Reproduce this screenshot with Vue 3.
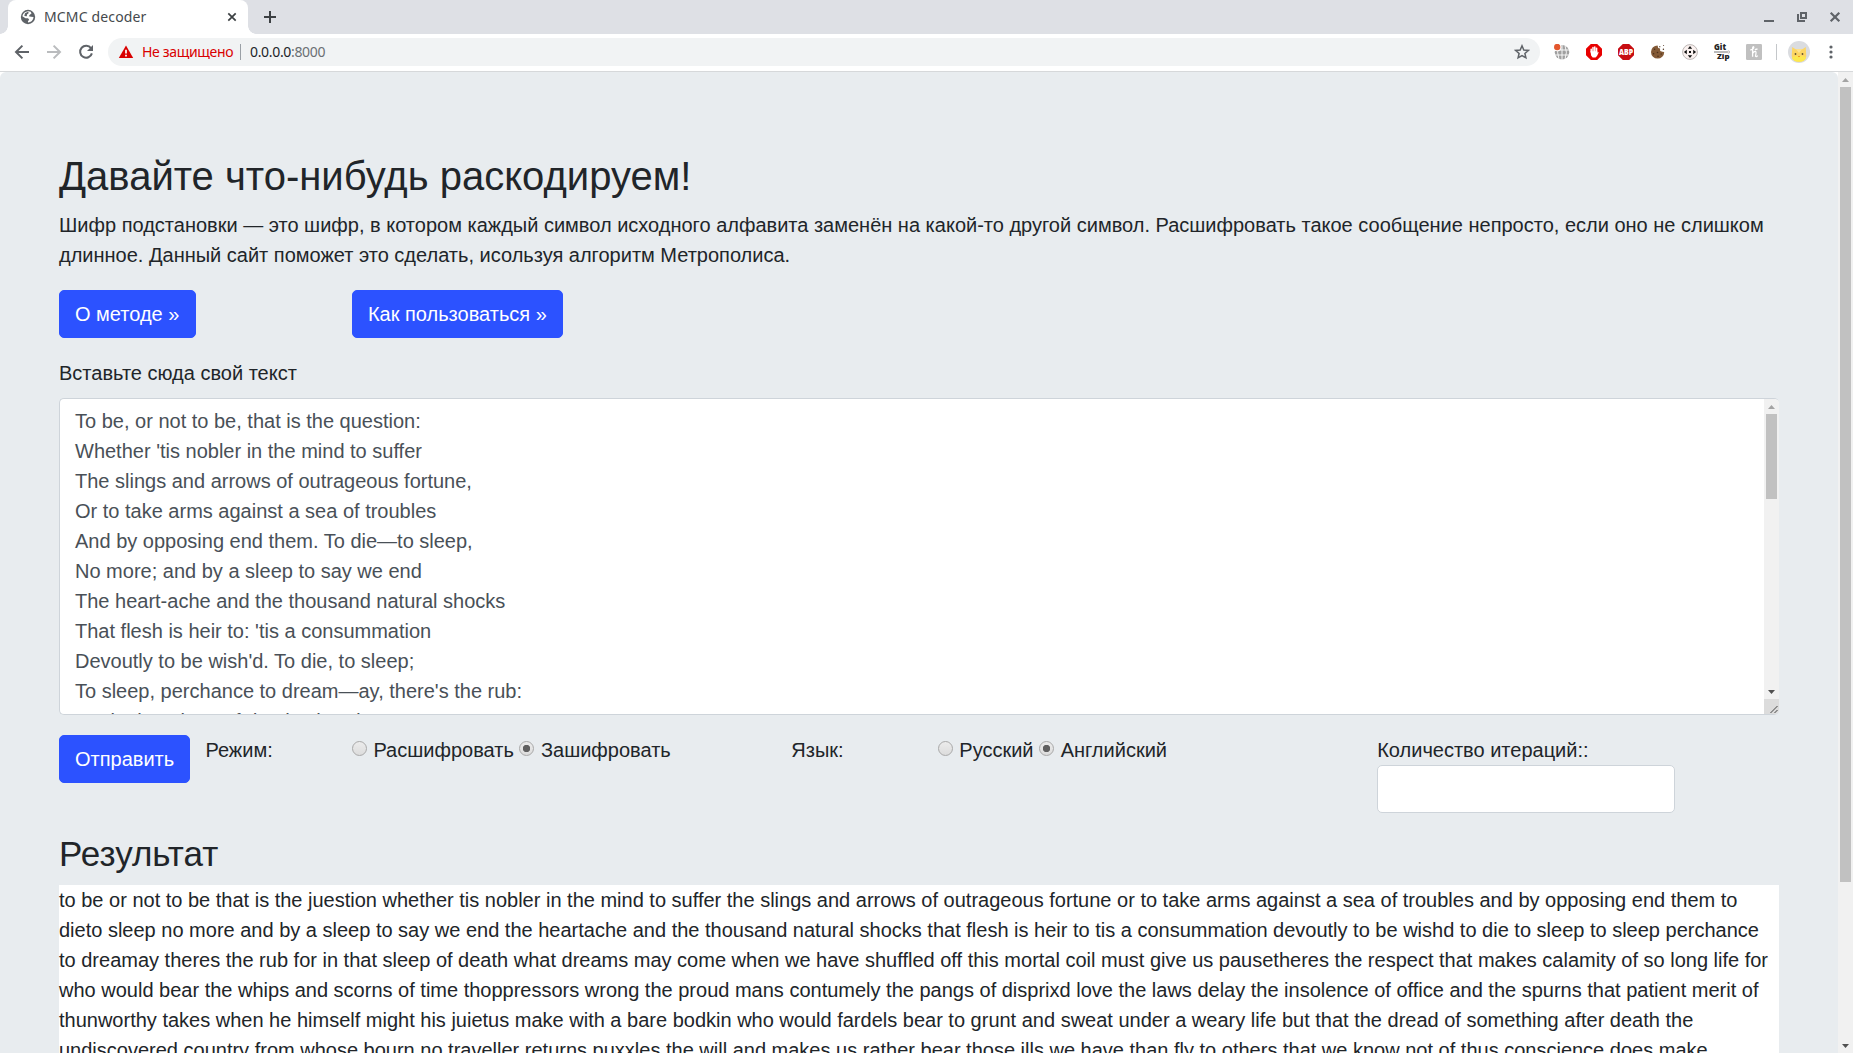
<script setup>
import { ref } from 'vue'

const mode = ref('encode')
const lang = ref('en')

const source = `To be, or not to be, that is the question:
Whether 'tis nobler in the mind to suffer
The slings and arrows of outrageous fortune,
Or to take arms against a sea of troubles
And by opposing end them. To die—to sleep,
No more; and by a sleep to say we end
The heart-ache and the thousand natural shocks
That flesh is heir to: 'tis a consummation
Devoutly to be wish'd. To die, to sleep;
To sleep, perchance to dream—ay, there's the rub:
For in that sleep of death what dreams may come,`

const result =
  'to be or not to be that is the juestion whether tis nobler in the mind to suffer the slings and arrows of outrageous fortune or to take arms against a sea of troubles and by opposing end them to dieto sleep no more and by a sleep to say we end the heartache and the thousand natural shocks that flesh is heir to tis a consummation devoutly to be wishd to die to sleep to sleep perchance to dreamay theres the rub for in that sleep of death what dreams may come when we have shuffled off this mortal coil must give us pausetheres the respect that makes calamity of so long life for who would bear the whips and scorns of time thoppressors wrong the proud mans contumely the pangs of disprixd love the laws delay the insolence of office and the spurns that patient merit of thunworthy takes when he himself might his juietus make with a bare bodkin who would fardels bear to grunt and sweat under a weary life but that the dread of something after death the undiscovered country from whose bourn no traveller returns puxxles the will and makes us rather bear those ills we have than fly to others that we know not of thus conscience does make'
</script>

<template>
  <div class="window">
    <header class="tabstrip">
      <div class="tab">
        <svg class="favicon" width="16" height="16" viewBox="0 0 16 16">
          <circle cx="8" cy="8" r="7.2" fill="#5f6368" />
          <path d="M8.2 2.2 10.7 2.8 11.5 4.5 9.8 5.8 8.8 7.2 11 7.8 13.5 8.1C13.3 11.2 11 13.5 8.1 13.6L7.9 12.2 9.2 10.8 8 9.3 5.5 9.2 2.4 7.2C2.8 4.4 5.1 2.3 8.2 2.2Z" fill="#fff" />
          <path d="M5 4.2 8 2.8 8.8 4 7 5.4 6.8 7.3 4.3 7.1Z" fill="#5f6368" />
        </svg>
        <span class="tab-title">MCMC decoder</span>
        <svg class="tab-close" width="10" height="10" viewBox="0 0 10 10">
          <path d="M1.3 1.3 8.7 8.7M8.7 1.3 1.3 8.7" stroke="#3c4043" stroke-width="1.7" />
        </svg>
      </div>
      <svg class="new-tab" width="14" height="14" viewBox="0 0 14 14">
        <path d="M7 1V13M1 7H13" stroke="#3c4043" stroke-width="2" />
      </svg>
      <div class="controls">
        <svg width="12" height="14" viewBox="0 0 12 14"><path d="M1 11H11" stroke="#5f6368" stroke-width="2" /></svg>
        <svg width="12" height="14" viewBox="0 0 12 14">
          <path d="M5 3H10V8H5ZM2 4V11H9" fill="none" stroke="#5f6368" stroke-width="2" />
        </svg>
        <svg width="12" height="14" viewBox="0 0 12 14">
          <path d="M1.7 2.7 10.3 11.3M10.3 2.7 1.7 11.3" stroke="#5f6368" stroke-width="2.2" />
        </svg>
      </div>
    </header>

    <nav class="toolbar">
      <div class="nav">
        <svg width="16" height="16" viewBox="0 0 16 16"><path d="M15 8H2.5M8.4 1.6 2 8 8.4 14.4" fill="none" stroke="#5f6368" stroke-width="2" /></svg>
        <svg width="16" height="16" viewBox="0 0 16 16"><path d="M1 8H13.5M7.6 1.6 14 8 7.6 14.4" fill="none" stroke="#babcbe" stroke-width="2" /></svg>
        <svg width="16" height="16" viewBox="0 0 16 16">
          <path d="M13 4.2A6 6 0 1 0 13.9 9.4" fill="none" stroke="#5f6368" stroke-width="2" />
          <path d="M15 1V7H9Z" fill="#5f6368" />
        </svg>
      </div>
      <div class="omnibox">
        <svg width="16" height="14" viewBox="0 0 16 14">
          <path d="M8 0.6 15.2 13H0.8Z" fill="#d90000" />
          <path d="M8 4.8V8.6M8 9.8V11.4" stroke="#fff" stroke-width="1.7" />
        </svg>
        <span class="insecure">Не защищено</span>
        <i class="divider"></i>
        <span class="url">0.0.0.0<span class="port">:8000</span></span>
        <svg class="star" width="16" height="16" viewBox="0 0 16 16">
          <path d="M8 1.8 9.8 6 14.3 6.4 10.9 9.4 11.9 13.8 8 11.5 4.1 13.8 5.1 9.4 1.7 6.4 6.2 6Z" fill="none" stroke="#5f6368" stroke-width="1.5" />
        </svg>
      </div>
      <div class="extensions">
        <svg width="16" height="16" viewBox="0 0 16 16">
          <circle cx="8" cy="8.3" r="7.2" fill="#a0a0a0" />
          <path d="M8 1V16M.5 6H15.5M.5 11H15.5M5 1.5Q2.2 8.3 5 15.3M11 1.5Q13.8 8.3 11 15.3" fill="none" stroke="#fff" stroke-width=".9" />
          <circle cx="3.4" cy="3.2" r="4" fill="#fff" />
          <circle cx="3.2" cy="3" r="3.2" fill="#e4572e" />
        </svg>
        <svg width="16" height="16" viewBox="0 0 16 16">
          <path d="M4.8 0H11.2L16 4.8V11.2L11.2 16H4.8L0 11.2V4.8Z" fill="#e80000" />
          <path d="M5.2 8V5.2M7 8V3.5M8.8 8V3M10.6 8V4.2" stroke="#fff" stroke-width="1.5" stroke-linecap="round" />
          <path d="M4.5 7.2H11.3V8.8L12 7.9 12.7 8.4 11 12 9.5 13.4H6.7L5.1 11.4Z" fill="#fff" />
        </svg>
        <svg class="spill" width="16" height="16" viewBox="0 0 16 16">
          <path d="M4.8 0H11.2L16 4.8V11.2L11.2 16H4.8L0 11.2V4.8Z" fill="#c70d12" />
          <text x="1" y="11" textLength="14" lengthAdjust="spacingAndGlyphs" font-family="Open Sans, sans-serif" font-weight="800" font-size="8.4" fill="#fff">ABP</text>
        </svg>
        <svg width="16" height="16" viewBox="0 0 16 16">
          <path d="M7.6 1.4 8.2 4 10 4.6 10.2 7 12.4 7.7 14.2 8A6.6 6.6 0 1 1 7.6 1.4Z" fill="#835a37" />
          <g fill="#4c2f1a"><circle cx="4.6" cy="5.3" r=".8" /><circle cx="3.6" cy="9.7" r=".8" /><circle cx="7.5" cy="8.5" r=".8" /><circle cx="8" cy="12.3" r=".8" /><circle cx="11.2" cy="10" r=".7" /><circle cx="9.8" cy="2.7" r=".6" /><circle cx="13.4" cy="5.2" r=".7" /><circle cx="13.6" cy="1.6" r=".5" /></g>
        </svg>
        <svg width="16" height="16" viewBox="0 0 16 16">
          <circle cx="8" cy="8" r="7.4" fill="#fbf2f0" stroke="#bdb7b5" stroke-width="1" />
          <path d="M8 1.9 10.2 4.8H5.8ZM8 14.1 5.8 11.2H10.2ZM1.9 8 4.8 5.8V10.2ZM14.1 8 11.2 10.2V5.8ZM7 7H9V9H7Z" fill="#111" />
        </svg>
        <svg class="spill" width="16" height="16" viewBox="0 0 16 16">
          <text x="0" y="6.4" textLength="12" lengthAdjust="spacingAndGlyphs" font-family="Open Sans, sans-serif" font-weight="800" font-size="8" fill="#222">Git</text>
          <path d="M0 8H13" stroke="#777" stroke-width="1" />
          <circle cx="14.5" cy="8" r="1.1" fill="none" stroke="#999" stroke-width=".7" />
          <text x="3" y="15" textLength="12.5" lengthAdjust="spacingAndGlyphs" font-family="Open Sans, sans-serif" font-weight="800" font-size="7.6" fill="#222">Zip</text>
        </svg>
        <svg width="16" height="16" viewBox="0 0 16 16">
          <rect width="16" height="16" rx="1.2" fill="#c0c0c0" />
          <path d="M4.3 6.2Q7.8 4.8 7.8 3.2 7.2 1.9 6.6 4V12.8M6.6 9.4Q8.2 6.8 9.7 7.4 10.4 8 9.5 12.2 10.2 13.3 11.8 11.6M8.8 5.6 11.5 5" fill="none" stroke="#fff" stroke-width="1.3" />
        </svg>
      </div>
      <i class="divider tall"></i>
      <svg class="avatar" width="22" height="22" viewBox="0 0 22 22">
        <circle cx="11" cy="11" r="11" fill="#dadce0" />
        <path d="M4.3 6 7.5 8.2H14.5L17.7 6 18.3 15Q17.8 20.8 11 20.8T3.7 15Z" fill="#fdd663" />
        <path d="M8 8.2H14L11 12Z" fill="#fde293" />
        <path d="M4 16.3Q11 13.8 18 16.3 16.8 20.8 11 20.8 5.2 20.8 4 16.3Z" fill="#fce94f" />
        <circle cx="7.5" cy="13" r=".9" fill="#5f5034" /><circle cx="14.5" cy="13" r=".9" fill="#5f5034" />
        <path d="M10 15H12L11 16.3Z" fill="#e8710a" />
      </svg>
      <svg class="menu" width="4" height="14" viewBox="0 0 4 14">
        <g fill="#5f6368"><circle cx="2" cy="2" r="1.6" /><circle cx="2" cy="7" r="1.6" /><circle cx="2" cy="12" r="1.6" /></g>
      </svg>
    </nav>

    <div class="viewport">
      <main class="page">
        <h1>Давайте что-нибудь раскодируем!</h1>
        <p class="lead">
          Шифр подстановки — это шифр, в котором каждый символ исходного алфавита заменён на какой-то другой символ.
          Расшифровать такое сообщение непросто, если оно не слишком длинное. Данный сайт поможет это сделать, исользуя
          алгоритм Метрополиса.
        </p>
        <div class="links grid">
          <div class="span2"><a class="btn">О методе »</a></div>
          <div class="span2"><a class="btn">Как пользоваться »</a></div>
        </div>

        <label class="field-label">Вставьте сюда свой текст</label>
        <div class="textarea">
          <div class="textarea-text">{{ source }}</div>
          <div class="textarea-side">
            <div class="scroll">
              <i class="arrow up"></i>
              <i class="thumb"></i>
              <i class="arrow down"></i>
            </div>
            <svg class="resizer" width="15" height="15" viewBox="0 0 15 15">
              <rect width="15" height="15" fill="#dcdcdc" />
              <path d="M6.5 14 13.5 7M10.5 14 13.5 11" stroke="#444" stroke-width="1" />
            </svg>
          </div>
        </div>

        <div class="grid options">
          <div><button class="btn submit" type="button">Отправить</button></div>
          <div>Режим:</div>
          <div class="radios span3">
            <label @click="mode = 'decode'"><i class="radio" :class="{ on: mode === 'decode' }"></i>Расшифровать</label>
            <label @click="mode = 'encode'"><i class="radio" :class="{ on: mode === 'encode' }"></i>Зашифровать</label>
          </div>
          <div>Язык:</div>
          <div class="radios span3">
            <label @click="lang = 'ru'"><i class="radio" :class="{ on: lang === 'ru' }"></i>Русский</label>
            <label @click="lang = 'en'"><i class="radio" :class="{ on: lang === 'en' }"></i>Английский</label>
          </div>
          <div class="span3">
            <div>Количество итераций::</div>
            <input class="input" type="text" />
          </div>
        </div>

        <h2>Результат</h2>
        <div class="result">{{ result }}</div>
      </main>
      <aside class="scroll page-scroll">
        <i class="arrow up"></i>
        <i class="thumb"></i>
        <i class="arrow down"></i>
      </aside>
    </div>
  </div>
</template>

<style>
body {
  margin: 0;
  overflow: hidden;
}
</style>

<style scoped>
* {
  box-sizing: border-box;
}
svg {
  display: block;
  flex: none;
}
.spill {
  overflow: visible;
}
.window {
  width: 1853px;
  height: 1053px;
  display: flex;
  flex-direction: column;
  overflow: hidden;
  background: #fff;
  font-family: 'Liberation Sans', Arial, sans-serif;
  color: #212529;
}
.tabstrip {
  height: 34px;
  flex: none;
  display: flex;
  align-items: center;
  background: #dee0e5;
  padding: 0 12px 0 8px;
}
.tab {
  position: relative;
  width: 240px;
  height: 34px;
  padding: 0 11px 0 12px;
  display: flex;
  align-items: center;
  background: #fff;
  border-radius: 8px 8px 0 0;
}
.tab::before,
.tab::after {
  content: '';
  position: absolute;
  bottom: 0;
  width: 8px;
  height: 8px;
}
.tab::before {
  left: -8px;
  background: radial-gradient(circle at 0 0, #dee0e5 7.5px, #fff 8px);
}
.tab::after {
  right: -8px;
  background: radial-gradient(circle at 100% 0, #dee0e5 7.5px, #fff 8px);
}
.tab-title {
  margin-left: 8px;
  font: 14px/20px 'Noto Sans', sans-serif;
  letter-spacing: 0.15px;
  color: #45494d;
}
.tab-close {
  margin-left: auto;
}
.new-tab {
  margin-left: 15px;
}
.controls {
  margin-left: auto;
  display: flex;
  gap: 21px;
}
.toolbar {
  height: 38px;
  flex: none;
  display: flex;
  align-items: center;
  padding: 0 20px 1px 14px;
  border-bottom: 1px solid #d6d8da;
}
.nav {
  width: 94px;
  display: flex;
  gap: 16px;
}
.omnibox {
  width: 1432px;
  height: 28px;
  flex: none;
  display: flex;
  align-items: center;
  padding: 0 10px;
  border-radius: 14px;
  background: #f1f3f4;
  font: 14px/20px 'Noto Sans', sans-serif;
  letter-spacing: -0.33px;
}
.insecure {
  margin-left: 8px;
  width: 98px;
  color: #d90000;
  white-space: nowrap;
}
.divider {
  width: 1px;
  height: 16px;
  flex: none;
  background: #9aa0a6;
}
.url {
  margin-left: 9px;
}
.port {
  color: #6b6f73;
}
.star {
  margin-left: auto;
}
.extensions {
  margin-left: 14px;
  padding-right: 6px;
  display: flex;
  gap: 16px;
}
.tall {
  margin-left: 8px;
  background: #c4c7ca;
}
.avatar {
  margin-left: 11px;
}
.menu {
  margin-left: auto;
}
.viewport {
  flex: 1;
  min-height: 0;
  display: flex;
}
.page {
  width: 1838px;
  flex: none;
  overflow: hidden;
  padding: 80px 59px 0;
  border-radius: 6px 6px 0 0;
  background: #e8ecef;
  font-size: 20px;
  line-height: 30px;
}
h1,
h2 {
  margin: 0;
  font-weight: 400;
  line-height: 1.2;
}
h1 {
  font-size: 40px;
  margin-bottom: 10px;
}
.lead {
  margin: 0 0 20px;
}
.grid {
  display: grid;
  grid-template-columns: repeat(12, 146.48px);
}
.span2 {
  grid-column: span 2;
}
.span3 {
  grid-column: span 3;
}
.btn {
  display: inline-block;
  height: 48px;
  padding: 8px 15.4px 8px 15px;
  border: 1px solid #2c52ff;
  border-radius: 5px;
  background: #2c52ff;
  color: #fff;
  font: inherit;
  line-height: 30px;
  vertical-align: top;
}
.submit {
  padding-right: 15px;
}
.field-label {
  display: block;
  margin-top: 20px;
}
.textarea {
  height: 317px;
  margin-top: 10px;
  display: flex;
  overflow: hidden;
  border: 1px solid #ced4da;
  border-right: 0;
  border-radius: 5px;
  background: #fff;
}
.textarea-text {
  flex: 1;
  height: 315px;
  padding: 7px 15px 0;
  overflow: hidden;
  white-space: pre;
  color: #495057;
}
.textarea-side {
  width: 15px;
}
.scroll {
  display: flex;
  flex-direction: column;
  align-items: center;
  width: 15px;
  height: 300px;
  background: #f1f1f1;
}
.arrow {
  width: 7px;
  height: 4px;
  flex: none;
}
.up {
  margin-top: 6px;
  background: #a3a3a3;
  clip-path: polygon(50% 0, 100% 100%, 0 100%);
}
.down {
  margin: auto 0 5px;
  background: #505050;
  clip-path: polygon(0 0, 100% 0, 50% 100%);
}
.thumb {
  width: 11px;
  height: 85px;
  margin-top: 5px;
  background: #c1c1c1;
}
.options {
  margin-top: 20px;
  height: 78px;
}
.radios {
  display: flex;
  white-space: nowrap;
  gap: 5.6px;
}
.radios label {
  display: flex;
}
.radio {
  width: 15px;
  height: 15px;
  margin: 6px 6.5px 0 0;
  flex: none;
  border: 1px solid #a9a9a9;
  border-radius: 50%;
  background: linear-gradient(#ececec, #dcdcdc);
}
.radio.on {
  background: radial-gradient(circle, #606060 3.4px, transparent 4px), linear-gradient(#ececec, #dcdcdc);
}
.input {
  display: block;
  width: 298px;
  height: 48px;
  border: 1px solid #ced4da;
  border-radius: 5px;
  background: #fff;
  font: inherit;
  padding: 8px 16px;
}
h2 {
  margin-top: 22px;
  margin-bottom: 12px;
  height: 38px;
  font-size: 35px;
  line-height: 38px;
}
.result {
  background: #fff;
}
.page-scroll {
  height: 981px;
}
.page-scroll .thumb {
  height: 795px;
}
</style>
